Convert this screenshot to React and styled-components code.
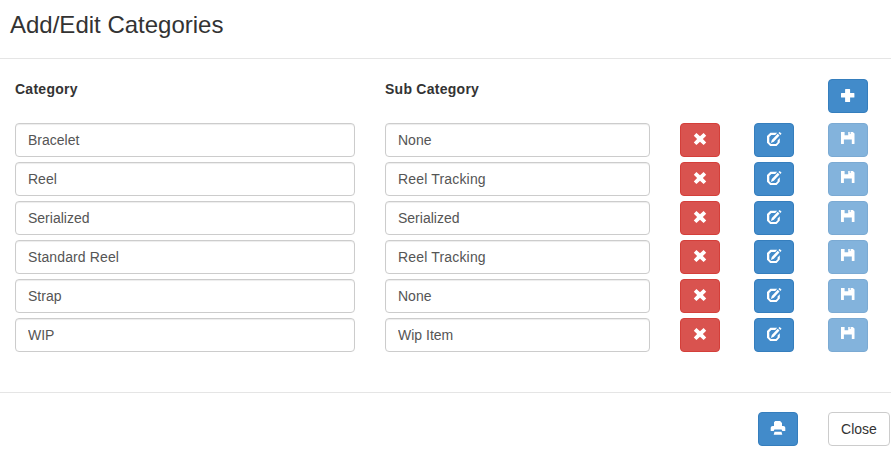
import React from "react";
import styled, { createGlobalStyle } from "styled-components";

const GlobalStyle = createGlobalStyle`
  *, *::before, *::after { box-sizing: border-box; }
  body {
    margin: 0;
    background: #fff;
    color: #333;
    font: 14px/20px "Liberation Sans", Arial, sans-serif;
    overflow: hidden;
  }
`;

const Modal = styled.div`
  width: 891px;
  height: 465px;
  display: flex;
  flex-direction: column;
`;

const Header = styled.header`
  height: 59px;
  padding: 12px 10px 0;
  border-bottom: 1px solid #e5e5e5;
`;

const Title = styled.h4`
  margin: 0;
  font-size: 24px;
  line-height: 26px;
  font-weight: 400;
`;

const Body = styled.main`
  flex: 1;
  padding: 20px 15px 0;
`;

const Row = styled.div`
  display: grid;
  grid-template-columns: 336px 261px 40px 40px 40px;
  column-gap: 34px;
  height: 34px;
  margin-bottom: ${(p) => (p.$heading ? 10 : 5)}px;
`;

const Label = styled.div`
  font-weight: 700;
  line-height: 20px;
  letter-spacing: 0.26px;
`;

const Input = styled.input`
  width: calc(100% + 4px);
  height: 34px;
  padding: 6px 12px;
  border: 1px solid #ccc;
  border-radius: 4px;
  box-shadow: inset 0 1px 1px rgba(0, 0, 0, 0.075);
  color: #555;
  background: #fff;
  font: inherit;
  letter-spacing: ${(p) => p.$spacing}px;
  outline: none;
`;

const tones = {
  primary: ["#428bca", "#357ebd", "#fff"],
  danger: ["#d9534f", "#d43f3a", "#fff"],
  plain: ["#fff", "#ccc", "#333"],
};

const Button = styled.button`
  display: flex;
  align-items: center;
  justify-content: center;
  width: ${(p) => p.$width || 40}px;
  height: 34px;
  padding: 0;
  grid-column: ${(p) => p.$column || "auto"};
  border: 1px solid ${(p) => tones[p.$tone][1]};
  border-radius: 4px;
  background: ${(p) => tones[p.$tone][0]};
  color: ${(p) => tones[p.$tone][2]};
  font: inherit;
  opacity: ${(p) => (p.disabled ? 0.65 : 1)};
`;

const Glyph = styled.svg`
  display: block;
  flex: none;
  width: 20px;
  height: 18px;
  fill: currentColor;
`;

const Footer = styled.footer`
  display: flex;
  justify-content: flex-end;
  gap: 30px;
  height: 73px;
  padding: 19px 1px 0;
  border-top: 1px solid #e5e5e5;
`;

const paths = {
  plus: "M7.600 2h4q.5 0 .5.5V6.100h3.800q.5 0 .5.5v3.300q0 .5-.5.5h-3.800V14.500q0 .5-.5.5h-4q-.5 0-.5-.5V10.400H3.500q-.5 0-.5-.5V6.600q0-.5.5-.5h3.600V2.500q0-.5.5-.5Z",
  remove: "M6.400 2 10 5.300 13.600 2 16.200 4.700 12.900 8l3.300 3.400-2.600 2.700L10 10.800l-3.600 3.300-2.600-2.700L7.100 8 3.800 4.700Z",
  edit: "M6.400 1.700h6.800l-2 2.200H7.300L5.300 6v5.200l1.700 1.700h4.900l1.700-1.700V9.500l2.200-2.200v4.200L12.600 15H6.200L3 11.800V5ZM13.700 2.800l1.800 1.800-5.700 6.200-2.900 1.100.9-3ZM14.400 2 15.700.900l1.900 1.800-1.300 1.200Z",
  save: "M3 1h3.600v3.300h3.600V1h1.600v2h.800V1h2.300L16.500 2.600v9.900q0 .5-.5.5h-2.200V8.600H5.900V13H3.500q-.5 0-.5-.5Z",
  print: "M7.200 1h4.900L14 3V6h1.300q2 0 2 1.700V11h-3l-.7-1.400H6.400L5.700 11h-3V7.700Q2.700 6 4.700 6H6V2.200ZM6.500 11.700h7l.8 3.100H5.700Z",
};

const Icon = ({ name }) => (
  <Glyph viewBox="0 0 20 18" aria-hidden="true">
    <path d={paths[name]} />
  </Glyph>
);

const categories = [
  ["Bracelet", "None"],
  ["Reel", "Reel Tracking"],
  ["Serialized", "Serialized"],
  ["Standard Reel", "Reel Tracking"],
  ["Strap", "None"],
  ["WIP", "Wip Item"],
];

const spacingFor = (text) =>
  text === "Reel Tracking" ? 0.17 : text === "Standard Reel" ? 0.12 : 0;

export default function App() {
  return (
    <Modal>
      <GlobalStyle />
      <Header>
        <Title>Add/Edit Categories</Title>
      </Header>
      <Body>
        <Row $heading>
          <Label>Category</Label>
          <Label>Sub Category</Label>
          <Button $tone="primary" $column="5" aria-label="Add">
            <Icon name="plus" />
          </Button>
        </Row>
        {categories.map(([category, sub]) => (
          <Row key={category}>
            <Input defaultValue={category} $spacing={spacingFor(category)} />
            <Input defaultValue={sub} $spacing={spacingFor(sub)} />
            <Button $tone="danger" aria-label="Remove">
              <Icon name="remove" />
            </Button>
            <Button $tone="primary" aria-label="Edit">
              <Icon name="edit" />
            </Button>
            <Button $tone="primary" disabled aria-label="Save">
              <Icon name="save" />
            </Button>
          </Row>
        ))}
      </Body>
      <Footer>
        <Button $tone="primary" aria-label="Print">
          <Icon name="print" />
        </Button>
        <Button $tone="plain" $width={62}>Close</Button>
      </Footer>
    </Modal>
  );
}
